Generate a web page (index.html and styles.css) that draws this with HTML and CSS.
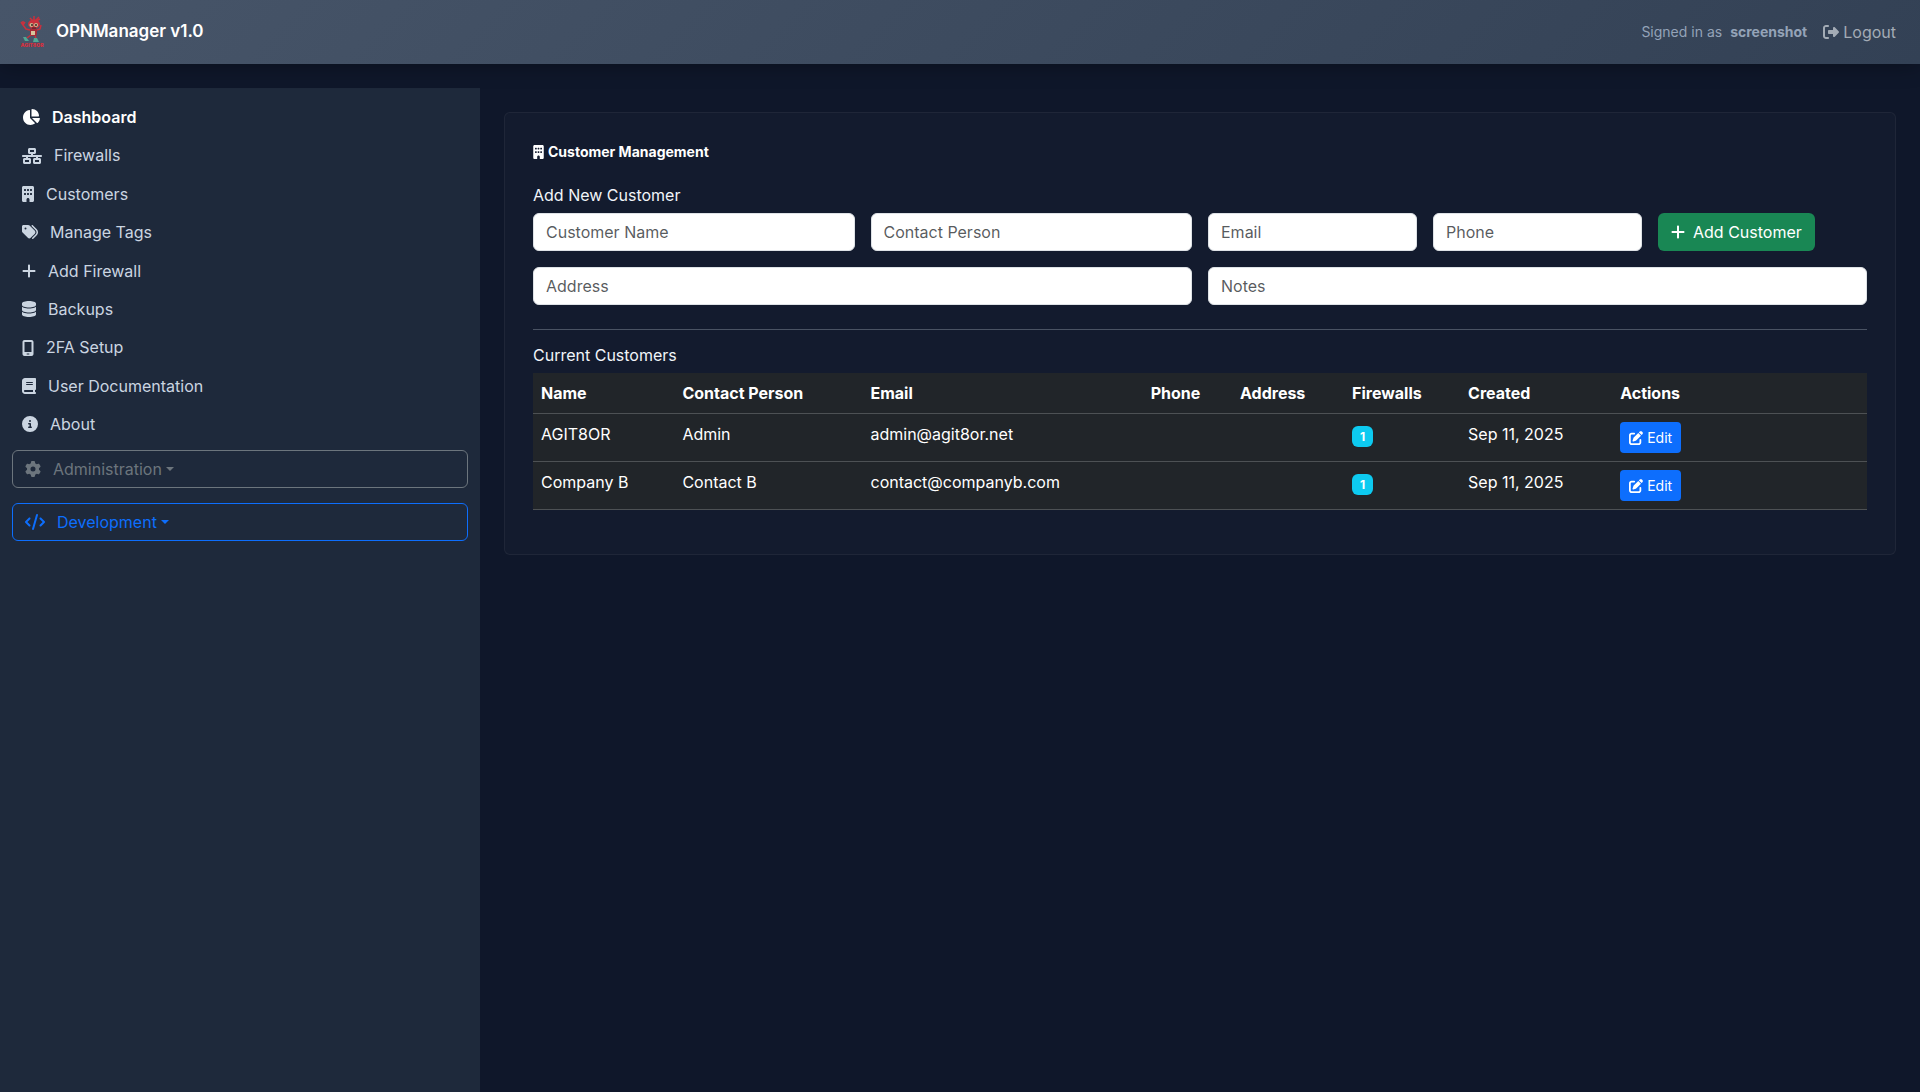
FILE: index.html
```html
<!DOCTYPE html>
<html lang="en">
<head>
    <meta charset="UTF-8">
    <meta name="viewport" content="width=device-width, initial-scale=1.0">
    <title>Customers - OPNManager</title>
    <link rel="stylesheet" href="styles.css">
</head>
<body>
    <!-- Icon sprite -->
    <svg class="sprite" aria-hidden="true">
        <symbol id="i-pie" viewBox="0 0 576 512"><path d="M304 240V16.600c0-9 7-16.600 16-16.600C443.700 0 544 100.300 544 224c0 9-7.600 16-16.600 16H304zM32 272C32 150.700 122.100 50.300 239 34.300c9.200-1.300 17 6.100 17 15.400V288L412.500 444.500c6.700 6.700 6.200 17.700-1.500 23.100C371.800 495.600 323.800 512 272 512C139.500 512 32 404.600 32 272zm526.400 16c9.300 0 16.600 7.800 15.400 17c-7.700 55.900-34.600 105.600-73.900 142.300c-6 5.600-15.400 5.200-21.200-.7L320 288H558.400z"/></symbol>
        <symbol id="i-sitemap" viewBox="0 0 640 512"><path fill-rule="evenodd" d="M256 64h128v64H256zM240 0c-26.500 0-48 21.500-48 48v96c0 26.500 21.500 48 48 48h48v32H32c-17.700 0-32 14.300-32 32s14.300 32 32 32h96v32H80c-26.500 0-48 21.500-48 48v96c0 26.500 21.500 48 48 48h160c26.500 0 48-21.500 48-48v-96c0-26.500-21.500-48-48-48h-48v-32h256v32h-48c-26.500 0-48 21.500-48 48v96c0 26.500 21.500 48 48 48h160c26.500 0 48-21.500 48-48v-96c0-26.500-21.500-48-48-48h-48v-32h96c17.700 0 32-14.300 32-32s-14.300-32-32-32H352v-32h48c26.500 0 48-21.500 48-48V48c0-26.500-21.500-48-48-48H240zM96 448v-64h128v64H96zm320-64h128v64H416v-64z"/></symbol>
        <symbol id="i-building" viewBox="0 0 384 512"><path fill-rule="evenodd" d="M48 0C21.500 0 0 21.500 0 48V464c0 26.500 21.500 48 48 48h96V432c0-26.500 21.500-48 48-48s48 21.500 48 48v80h96c26.500 0 48-21.500 48-48V48c0-26.500-21.500-48-48-48H48zM64 240c0-8.800 7.200-16 16-16h32c8.800 0 16 7.200 16 16v32c0 8.800-7.200 16-16 16H80c-8.800 0-16-7.200-16-16V240zm112-16h32c8.800 0 16 7.200 16 16v32c0 8.800-7.200 16-16 16H176c-8.800 0-16-7.200-16-16V240c0-8.800 7.200-16 16-16zm80 16c0-8.800 7.200-16 16-16h32c8.800 0 16 7.200 16 16v32c0 8.800-7.200 16-16 16H272c-8.800 0-16-7.200-16-16V240zM80 96h32c8.800 0 16 7.200 16 16v32c0 8.800-7.200 16-16 16H80c-8.800 0-16-7.200-16-16V112c0-8.800 7.200-16 16-16zm80 16c0-8.800 7.200-16 16-16h32c8.800 0 16 7.200 16 16v32c0 8.800-7.200 16-16 16H176c-8.800 0-16-7.200-16-16V112zM272 96h32c8.800 0 16 7.200 16 16v32c0 8.800-7.200 16-16 16H272c-8.800 0-16-7.200-16-16V112c0-8.800 7.200-16 16-16z"/></symbol>
        <symbol id="i-tags" viewBox="0 0 512 512"><path d="M345 39.100L472.800 168.400c52.400 53 52.400 138.200 0 191.200L360.800 472.900c-9.300 9.400-24.500 9.500-33.900 .2s-9.500-24.500-.2-33.900L438.600 325.900c33.900-34.300 33.900-89.400 0-123.700L310.900 72.900c-9.300-9.400-9.200-24.600 .2-33.900s24.600-9.200 33.900 .2zM0 229.500V80C0 53.500 21.500 32 48 32H197.500c17 0 33.300 6.700 45.300 18.700l168 168c25 25 25 65.500 0 90.500L277.300 442.700c-25 25-65.500 25-90.500 0l-168-168C6.700 262.700 0 246.500 0 229.500zM144 144a32 32 0 1 0 -64 0 32 32 0 1 0 64 0z"/></symbol>
        <symbol id="i-plus" viewBox="0 0 448 512"><path d="M256 80c0-17.700-14.300-32-32-32s-32 14.300-32 32V224H48c-17.700 0-32 14.300-32 32s14.300 32 32 32H192V432c0 17.700 14.300 32 32 32s32-14.300 32-32V288H400c17.700 0 32-14.300 32-32s-14.300-32-32-32H256V80z"/></symbol>
        <symbol id="i-database" viewBox="0 0 448 512"><path d="M448 80v48c0 44.200-100.300 80-224 80S0 172.200 0 128V80C0 35.800 100.300 0 224 0S448 35.800 448 80zM393.200 214.700c20.800-7.400 39.900-16.900 54.800-28.600V288c0 44.200-100.300 80-224 80S0 332.200 0 288V186.100c14.900 11.800 34 21.200 54.800 28.600C99.700 230.700 159.500 240 224 240s124.300-9.300 169.200-25.300zM0 346.100c14.900 11.800 34 21.200 54.800 28.600C99.700 390.700 159.500 400 224 400s124.300-9.300 169.200-25.300c20.800-7.400 39.900-16.900 54.800-28.600V432c0 44.200-100.300 80-224 80S0 476.200 0 432V346.100z"/></symbol>
        <symbol id="i-mobile" viewBox="0 0 384 512"><path fill-rule="evenodd" d="M16 64C16 28.700 44.700 0 80 0H304c35.300 0 64 28.700 64 64V448c0 35.300-28.700 64-64 64H80c-35.300 0-64-28.700-64-64V64zM144 448c0 8.800 7.200 16 16 16h64c8.800 0 16-7.200 16-16s-7.200-16-16-16H160c-8.800 0-16 7.200-16 16zM304 64H80V384H304V64z"/></symbol>
        <symbol id="i-book" viewBox="0 0 448 512"><path fill-rule="evenodd" d="M96 0C43 0 0 43 0 96V416c0 53 43 96 96 96H384h32c17.700 0 32-14.300 32-32s-14.300-32-32-32V384c17.700 0 32-14.300 32-32V32c0-17.700-14.300-32-32-32H384 96zm0 384H352v64H96c-17.700 0-32-14.300-32-32s14.300-32 32-32zm32-240c0-8.800 7.200-16 16-16H336c8.800 0 16 7.200 16 16s-7.200 16-16 16H144c-8.800 0-16-7.200-16-16zm16 48H336c8.800 0 16 7.200 16 16s-7.200 16-16 16H144c-8.800 0-16-7.200-16-16s7.200-16 16-16z"/></symbol>
        <symbol id="i-info" viewBox="0 0 512 512"><path fill-rule="evenodd" d="M256 512A256 256 0 1 0 256 0a256 256 0 1 0 0 512zM216 336h24V272H216c-13.300 0-24-10.700-24-24s10.700-24 24-24h48c13.300 0 24 10.700 24 24v88h8c13.300 0 24 10.700 24 24s-10.700 24-24 24H216c-13.300 0-24-10.700-24-24s10.700-24 24-24zm40-208a32 32 0 1 1 0 64 32 32 0 1 1 0-64z"/></symbol>
        <symbol id="i-cog" viewBox="0 0 512 512"><path fill-rule="evenodd" d="M495.900 166.600c3.200 8.700 .5 18.400-6.400 24.600l-43.300 39.400c1.100 8.300 1.700 16.800 1.700 25.400s-.6 17.100-1.700 25.400l43.300 39.400c6.900 6.200 9.600 15.900 6.400 24.600c-4.400 11.900-9.700 23.300-15.800 34.300l-4.700 8.100c-6.600 11-14 21.400-22.100 31.200c-5.900 7.200-15.700 9.600-24.500 6.800l-55.700-17.700c-13.400 10.300-28.200 18.900-44 25.400l-12.500 57.100c-2 9.100-9 16.300-18.200 17.800c-13.800 2.300-28 3.500-42.500 3.500s-28.700-1.200-42.500-3.500c-9.200-1.500-16.200-8.700-18.200-17.800l-12.500-57.100c-15.800-6.500-30.600-15.100-44-25.400L83.100 425.900c-8.800 2.800-18.600 .3-24.500-6.800c-8.100-9.800-15.500-20.200-22.100-31.200l-4.700-8.100c-6.100-11-11.400-22.400-15.800-34.300c-3.200-8.700-.5-18.400 6.400-24.600l43.300-39.400C64.600 273.100 64 264.600 64 256s.6-17.100 1.700-25.400L22.400 191.200c-6.900-6.200-9.600-15.900-6.400-24.600c4.400-11.900 9.700-23.300 15.800-34.300l4.700-8.100c6.600-11 14-21.400 22.100-31.200c5.900-7.200 15.700-9.600 24.500-6.800l55.700 17.700c13.400-10.300 28.200-18.900 44-25.400l12.500-57.100c2-9.100 9-16.300 18.200-17.800C227.300 1.200 241.500 0 256 0s28.700 1.200 42.500 3.500c9.200 1.500 16.200 8.700 18.200 17.800l12.500 57.100c15.800 6.500 30.600 15.100 44 25.400l55.700-17.700c8.800-2.800 18.600-.3 24.500 6.800c8.100 9.800 15.500 20.200 22.100 31.200l4.700 8.100c6.100 11 11.400 22.400 15.800 34.300zM256 336a80 80 0 1 0 0-160 80 80 0 1 0 0 160z"/></symbol>
        <symbol id="i-code" viewBox="0 0 640 512"><path d="M392.800 1.200c-17-4.900-34.700 5-39.600 22l-128 448c-4.900 17 5 34.700 22 39.600s34.700-5 39.600-22l128-448c4.900-17-5-34.700-22-39.600zm80.600 120.100c-12.500 12.500-12.500 32.800 0 45.300L562.700 256l-89.400 89.400c-12.500 12.500-12.500 32.800 0 45.300s32.800 12.500 45.300 0l112-112c12.500-12.500 12.500-32.800 0-45.300l-112-112c-12.500-12.500-32.800-12.500-45.300 0zm-306.700 0c-12.500-12.500-32.800-12.500-45.300 0l-112 112c-12.500 12.500-12.500 32.800 0 45.300l112 112c12.500 12.500 32.800 12.500 45.300 0s12.500-32.800 0-45.300L77.300 256l89.400-89.400c12.500-12.500 12.500-32.800 0-45.300z"/></symbol>
        <symbol id="i-logout" viewBox="0 0 512 512"><path d="M377.900 105.900L500.700 228.700c7.200 7.200 11.300 17.100 11.300 27.300s-4.100 20.100-11.300 27.300L377.900 406.100c-6.400 6.400-15 9.900-24 9.900c-18.700 0-33.900-15.200-33.900-33.900l0-62.100-128 0c-17.700 0-32-14.300-32-32l0-64c0-17.700 14.300-32 32-32l128 0 0-62.100c0-18.700 15.200-33.900 33.900-33.900c9 0 17.600 3.600 24 9.900zM160 96L96 96c-17.700 0-32 14.300-32 32l0 256c0 17.700 14.300 32 32 32l64 0c17.700 0 32 14.300 32 32s-14.300 32-32 32l-64 0c-53 0-96-43-96-96L0 128C0 75 43 32 96 32l64 0c17.700 0 32 14.300 32 32s-14.300 32-32 32z"/></symbol>
        <symbol id="i-edit" viewBox="0 0 512 512"><path d="M471.600 21.700c-21.900-21.900-57.300-21.900-79.200 0L362.300 51.700l97.900 97.900 30.100-30.100c21.900-21.900 21.900-57.300 0-79.200L471.600 21.700zm-299.200 220c-6.100 6.100-10.800 13.600-13.500 21.900l-29.600 88.800c-2.900 8.600-.6 18.100 5.800 24.600s15.900 8.700 24.600 5.800l88.800-29.600c8.200-2.700 15.700-7.400 21.900-13.500L437.700 172.300 339.700 74.300 172.400 241.700zM96 64C43 64 0 107 0 160V416c0 53 43 96 96 96H352c53 0 96-43 96-96V320c0-17.700-14.300-32-32-32s-32 14.300-32 32v96c0 17.700-14.300 32-32 32H96c-17.700 0-32-14.300-32-32V160c0-17.700 14.300-32 32-32h96c17.700 0 32-14.300 32-32s-14.300-32-32-32H96z"/></symbol>
    </svg>

    <header class="topbar">
        <a class="brand" href="#">
            <svg class="brand-logo" viewBox="0 0 24 32" aria-hidden="true">
                <g fill="none" stroke="#c9303d" stroke-width="1.500">
                    <path d="M10 14L6 13L3 9M1 6l2 3M3 5v4M5 6L3 9M17 14l3-1l1-4M14 5L14 0M13 5L10 2M15 5l4-4M16 5l4-2"/>
                    <path d="M11 19L7 22M15 19l1 4"/>
                </g>
                <ellipse cx="14" cy="8" rx="6" ry="4.500" fill="#c9303d"/>
                <rect x="10" y="12" width="7" height="8" rx="2" fill="#a52c38"/>
                <rect x="11" y="15" width="4" height="4" fill="#d8c49c"/>
                <circle cx="11.500" cy="9" r="2" fill="#c9bd8f"/>
                <circle cx="16" cy="9" r="2" fill="#c9bd8f"/>
                <circle cx="12" cy="9" r="1" fill="#3d2428"/>
                <circle cx="16" cy="9" r="1" fill="#3d2428"/>
                <path d="M12 12h4" stroke="#3d2428"/>
                <path d="M3 21l3 0 3 4-4 0zM14 22h3l2 4h-6z" fill="#4fa894"/>
                <text x="12" y="31" class="logo-text" text-anchor="middle">AGIT8OR</text>
            </svg>
            <span class="brand-name">OPNManager v1.0</span>
        </a>
        <div class="user">
            <span class="signed">Signed in as</span>
            <strong class="username">screenshot</strong>
            <a class="logout" href="#"><svg class="icon"><use href="#i-logout"/></svg>Logout</a>
        </div>
    </header>

    <div class="layout">
        <aside class="sidebar">
            <nav class="menu">
                <a class="menu-link active" href="#"><svg class="icon w18"><use href="#i-pie"/></svg>Dashboard</a>
                <a class="menu-link" href="#"><svg class="icon w20"><use href="#i-sitemap"/></svg>Firewalls</a>
                <a class="menu-link" href="#"><svg class="icon w12"><use href="#i-building"/></svg>Customers</a>
                <a class="menu-link" href="#"><svg class="icon"><use href="#i-tags"/></svg>Manage Tags</a>
                <a class="menu-link" href="#"><svg class="icon w14"><use href="#i-plus"/></svg>Add Firewall</a>
                <a class="menu-link" href="#"><svg class="icon w14"><use href="#i-database"/></svg>Backups</a>
                <a class="menu-link" href="#"><svg class="icon w12"><use href="#i-mobile"/></svg>2FA Setup</a>
                <a class="menu-link" href="#"><svg class="icon w14"><use href="#i-book"/></svg>User Documentation</a>
                <a class="menu-link" href="#"><svg class="icon"><use href="#i-info"/></svg>About</a>
            </nav>
            <div class="menu-groups">
                <button type="button" class="group-btn"><svg class="icon"><use href="#i-cog"/></svg>Administration<span class="caret"></span></button>
                <button type="button" class="group-btn primary"><svg class="icon w20"><use href="#i-code"/></svg>Development<span class="caret"></span></button>
            </div>
        </aside>

        <main class="content">
            <section class="card">
                <h1 class="card-title"><svg class="icon"><use href="#i-building"/></svg>Customer Management</h1>

                <h2 class="section-title">Add New Customer</h2>
                <form class="customer-form">
                    <input class="field span-3" type="text" placeholder="Customer Name" aria-label="Customer Name">
                    <input class="field span-3" type="text" placeholder="Contact Person" aria-label="Contact Person">
                    <input class="field span-2" type="email" placeholder="Email" aria-label="Email">
                    <input class="field span-2" type="text" placeholder="Phone" aria-label="Phone">
                    <div class="span-2">
                        <button type="submit" class="btn-add"><svg class="icon w14"><use href="#i-plus"/></svg>Add Customer</button>
                    </div>
                    <input class="field span-6" type="text" placeholder="Address" aria-label="Address">
                    <input class="field span-6" type="text" placeholder="Notes" aria-label="Notes">
                </form>

                <hr class="divider">

                <h2 class="section-title">Current Customers</h2>
                <table class="customers">
                    <thead>
                        <tr>
                            <th class="col-name">Name</th>
                            <th class="col-contact">Contact Person</th>
                            <th class="col-email">Email</th>
                            <th class="col-phone">Phone</th>
                            <th class="col-address">Address</th>
                            <th class="col-firewalls">Firewalls</th>
                            <th class="col-created">Created</th>
                            <th class="col-actions">Actions</th>
                        </tr>
                    </thead>
                    <tbody>
                        <tr>
                            <td>AGIT8OR</td>
                            <td>Admin</td>
                            <td>admin@agit8or.net</td>
                            <td></td>
                            <td></td>
                            <td><span class="badge">1</span></td>
                            <td>Sep 11, 2025</td>
                            <td><button type="button" class="btn-edit"><svg class="icon"><use href="#i-edit"/></svg>Edit</button></td>
                        </tr>
                        <tr>
                            <td>Company B</td>
                            <td>Contact B</td>
                            <td>contact@companyb.com</td>
                            <td></td>
                            <td></td>
                            <td><span class="badge">1</span></td>
                            <td>Sep 11, 2025</td>
                            <td><button type="button" class="btn-edit"><svg class="icon"><use href="#i-edit"/></svg>Edit</button></td>
                        </tr>
                    </tbody>
                </table>
            </section>
        </main>
    </div>
</body>
</html>
```

FILE: styles.css
```css
* {
    box-sizing: border-box;
}
body {
    margin: 0;
    min-height: 100vh;
    display: flex;
    flex-direction: column;
    background: #0f172a;
    color: #f1f5f9;
    font-family: Inter, "Liberation Sans", sans-serif;
    font-size: 16px;
    line-height: 24px;
}
a {
    text-decoration: none;
    color: inherit;
}
button, input {
    font: inherit;
}
button {
    cursor: pointer;
}
.sprite {
    position: absolute;
    width: 0;
    height: 0;
}
.icon {
    width: 16px;
    height: 16px;
    flex: none;
    fill: currentColor;
}
.w12 { width: 12px; }
.w14 { width: 14px; }
.w18 { width: 18px; }
.w20 { width: 20px; }

/* Top bar */
.topbar {
    position: relative;
    display: flex;
    justify-content: space-between;
    align-items: center;
    height: 64px;
    padding: 0 24px 0 20px;
    background: linear-gradient(135deg, #475569, #334155);
    box-shadow: 0 2px 20px rgba(0, 0, 0, 0.3);
}
.brand {
    display: flex;
    align-items: center;
    gap: 12px;
    color: #fff;
}
.brand-name {
    padding-bottom: 2px;
    font-size: 17px;
    font-weight: 600;
}
.brand-logo {
    width: 24px;
    height: 32px;
}
.logo-text {
    font-size: 5px;
    font-weight: 900;
    fill: #d5303e;
}
.user {
    display: flex;
    align-items: center;
    color: #94a3b8;
    font-size: 14px;
}
.signed {
    margin-right: 8px;
}
.username {
    font-weight: 700;
}
.logout {
    display: flex;
    align-items: center;
    gap: 4px;
    margin-left: 16px;
    color: #a3abb5;
    font-size: 16px;
}

/* Sidebar */
.layout {
    flex: 1;
    display: flex;
    margin-top: 24px;
}
.sidebar {
    width: 25%;
    padding: 10px 12px;
    background: #1e293b;
}
.menu-link {
    display: flex;
    align-items: center;
    gap: 12px;
    padding: 8px 10px;
    line-height: 1.4;
    color: #cbd5e1;
}
.menu-link.active {
    color: #fff;
    font-weight: 600;
}
.menu-groups {
    display: grid;
    gap: 15px;
    margin-top: 6px;
}
.group-btn {
    display: flex;
    align-items: center;
    gap: 12px;
    padding: 6px 12px;
    border: 1px solid #6c757d;
    border-radius: 6px;
    background: transparent;
    color: #6c757d;
}
.group-btn.primary {
    border-color: #0d6efd;
    color: #0d6efd;
}
.caret {
    margin-left: -8px;
    border-top: 4px solid;
    border-left: 4px solid transparent;
    border-right: 4px solid transparent;
}

/* Content */
.content {
    flex: 1;
    padding: 24px;
}
.card {
    padding: 28px 28px 44px;
    border: 1px solid rgba(255, 255, 255, 0.05);
    border-radius: 6px;
    background: rgba(255, 255, 255, 0.02);
}
.card-title {
    display: flex;
    align-items: center;
    gap: 4px;
    margin: 0 0 24px;
    color: #fff;
    font-size: 14px;
    font-weight: 700;
    line-height: 21px;
}
.card-title .icon {
    width: 11px;
    height: 14px;
}
.section-title {
    margin: 0 0 8px;
    font-size: 16px;
    font-weight: 400;
    line-height: 19px;
}
.customer-form {
    display: grid;
    grid-template-columns: repeat(12, 1fr);
    gap: 16px;
}
.span-2 { grid-column: span 2; }
.span-3 { grid-column: span 3; }
.span-6 { grid-column: span 6; }
.field {
    width: 100%;
    height: 38px;
    padding: 6px 12px;
    border: 1px solid #dee2e6;
    border-radius: 6px;
    background: #fff;
    color: #212529;
}
.field::placeholder {
    color: rgba(33, 37, 41, 0.75);
}
.btn-add {
    display: flex;
    align-items: center;
    gap: 8px;
    padding: 7px 13px;
    border: 0;
    border-radius: 6px;
    background: #198754;
    color: #fff;
}
.divider {
    margin: 24px 0 16px;
    border: 0;
    border-top: 1px solid #4a5363;
}

/* Customers table */
.customers {
    width: 100%;
    border-collapse: separate;
    border-spacing: 0;
    background: #212529;
    color: #fff;
}
.customers th,
.customers td {
    padding: 8px;
    border-bottom: 1px solid #4d5154;
    text-align: left;
    vertical-align: top;
}
.customers th {
    font-weight: 700;
}
.col-name { width: 10.6%; }
.col-contact { width: 14.1%; }
.col-email { width: 21%; }
.col-phone { width: 6.7%; }
.col-address { width: 8.4%; }
.col-firewalls { width: 8.7%; }
.col-created { width: 11.4%; }
.col-actions { width: 19.1%; }
.badge {
    display: block;
    width: 21px;
    margin-top: 4px;
    border-radius: 6px;
    background: #0dcaf0;
    color: #fff;
    font-size: 12px;
    font-weight: 700;
    line-height: 21px;
    text-align: center;
}
.btn-edit {
    display: flex;
    align-items: center;
    gap: 4px;
    padding: 5px 9px;
    border: 0;
    border-radius: 4px;
    background: #0d6efd;
    color: #fff;
    font-size: 14px;
    line-height: 21px;
}
.btn-edit .icon {
    width: 14px;
    height: 14px;
}
```
